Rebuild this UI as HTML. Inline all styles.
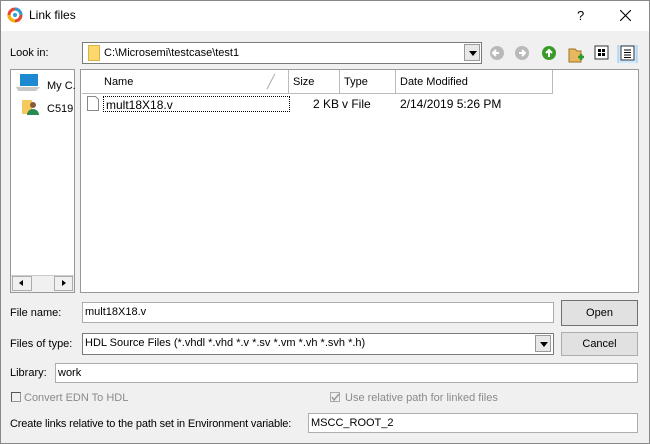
<!DOCTYPE html>
<html><head><style>
*{box-sizing:border-box;margin:0;padding:0}
body{width:650px;height:444px;overflow:hidden;font-family:"Liberation Sans",sans-serif;font-size:11px;color:#000;background:#f0f0f0;position:relative}
.a{position:absolute}
.win{left:0;top:0;width:650px;height:444px;border:1px solid #888;background:#f0f0f0}
.title{left:1px;top:1px;width:648px;height:30px;background:#fff}
.inp{background:#fff;border:1px solid #adadad;padding-left:2px;line-height:19px;white-space:nowrap}
.btn{background:#e1e1e1;border:1px solid #adadad;text-align:center}
.lbl{white-space:nowrap}
.dd{width:16px;height:17px;background:#e8e8e8;border:1px solid #999;}
.dd:after{content:"";position:absolute;left:4px;top:6px;border-left:4px solid transparent;border-right:4px solid transparent;border-top:5px solid #000}
.hd{top:1px;height:24px;line-height:24px;padding-left:4px;border-right:1px solid #bbb;background:#fff;white-space:nowrap}
</style></head><body>
<div class="a win"></div>
<div class="a title"></div>
<svg class="a" style="left:7px;top:7px" width="16" height="16" viewBox="0 0 16 16"><circle cx="8" cy="8" r="6" fill="none" stroke="#e8432d" stroke-width="3"/><path d="M8 2 A6 6 0 0 1 14 8" fill="none" stroke="#2a9fd8" stroke-width="3"/><path d="M2 8 A6 6 0 0 0 8 14" fill="none" stroke="#f4b400" stroke-width="3"/><circle cx="8" cy="8" r="2" fill="#2a9fd8"/></svg>
<div class="a lbl" style="left:29px;top:8px;font-size:12px">Link files</div>
<div class="a lbl" style="left:577px;top:8px;font-size:13px">?</div>
<svg class="a" style="left:620px;top:10px" width="11" height="11"><path d="M0 0L11 11M11 0L0 11" stroke="#000" stroke-width="1.1"/></svg>

<div class="a lbl" style="left:10px;top:47px">Look in:</div>
<div class="a inp" style="left:82px;top:42px;width:400px;height:22px;border-color:#7a7a7a"></div>
<div class="a" style="left:88px;top:45px;width:12px;height:16px;background:#fcd96d;border:1px solid #d9b24a"></div>
<div class="a lbl" style="left:104px;top:47px">C:\Microsemi\testcase\test1</div>
<div class="a dd" style="left:464px;top:44px"></div>
<svg class="a" style="left:489px;top:45px" width="150" height="18">
<circle cx="8" cy="8" r="7" fill="#b9b9b9"/><path d="M10 8H5M7 5L4 8L7 11" stroke="#fff" stroke-width="2" fill="none"/>
<circle cx="33" cy="8" r="7" fill="#b9b9b9"/><path d="M30 8H35M33 5L36 8L33 11" stroke="#fff" stroke-width="2" fill="none"/>
<circle cx="60" cy="8" r="7" fill="#3a9a2a"/><path d="M60 12V6M57 8L60 5L63 8" stroke="#fff" stroke-width="2" fill="none"/>
<path d="M80 4h6l2 2h4v11h-12z" fill="#e8b860" stroke="#a07020"/><path d="M89 12h6M92 9v6" stroke="#2a9a2a" stroke-width="2.5"/>
<rect x="106" y="1" width="13" height="13" fill="#fff" stroke="#333"/><rect x="109" y="4" width="3" height="3"/><rect x="113" y="4" width="3" height="3"/><rect x="109" y="8" width="3" height="3"/><rect x="113" y="8" width="3" height="3"/>
<rect x="129" y="-1" width="19" height="20" fill="#cce8ff" stroke="#99c8ee"/><rect x="132" y="1" width="13" height="14" fill="#fff" stroke="#333"/><path d="M135 5h7M135 7.5h7M135 10h7M135 12.5h7" stroke="#000"/>
</svg>

<div class="a" style="left:10px;top:69px;width:65px;height:224px;background:#fff;border:1px solid #999"></div>
<svg class="a" style="left:14px;top:72px" width="28" height="48"><rect x="6" y="2" width="18" height="12" fill="#1e88d0"/><path d="M2 15h24l-4 4H4z" fill="#c8c8c8"/><rect x="8" y="28" width="10" height="14" fill="#f4c95d"/><circle cx="19" cy="33" r="3" fill="#8a5a3a"/><path d="M13 43a6 6 0 0 1 12 0z" fill="#2a8a50"/></svg>
<div class="a lbl" style="left:47px;top:80px">My C.</div>
<div class="a lbl" style="left:47px;top:103px">C519</div>
<div class="a" style="left:11px;top:275px;width:63px;height:17px;background:#f0f0f0;border-top:1px solid #ccc"></div>
<div class="a btn" style="left:12px;top:276px;width:20px;height:15px;background:#f0f0f0"></div>
<div class="a" style="left:19px;top:280px;border-top:3px solid transparent;border-bottom:3px solid transparent;border-right:4px solid #000"></div>
<div class="a btn" style="left:54px;top:276px;width:19px;height:15px;background:#f0f0f0"></div>
<div class="a" style="left:62px;top:280px;border-top:3px solid transparent;border-bottom:3px solid transparent;border-left:4px solid #000"></div>

<div class="a" style="left:80px;top:69px;width:559px;height:224px;background:#fff;border:1px solid #999"></div>
<div class="a" style="left:81px;top:70px;width:557px;height:26px;background:#fff"></div>
<div class="a hd" style="left:82px;top:70px;width:207px;padding-left:22px;border-bottom:1px solid #bbb">Name</div>
<div class="a lbl" style="left:267px;top:74px;color:#aaa;font-size:13px">╱</div>
<div class="a hd" style="left:289px;top:70px;width:51px;border-bottom:1px solid #bbb">Size</div>
<div class="a hd" style="left:340px;top:70px;width:56px;border-bottom:1px solid #bbb">Type</div>
<div class="a hd" style="left:396px;top:70px;width:157px;border-bottom:1px solid #bbb">Date Modified</div>
<svg class="a" style="left:87px;top:96px" width="12" height="15"><path d="M.5 .5h8l3 3v11H.5z" fill="#fff" stroke="#888"/></svg>
<div class="a" style="left:103px;top:96px;width:187px;height:16px;border:1px dotted #000"></div>
<div class="a lbl" style="left:106px;top:98px;font-size:12px">mult18X18.v</div>
<div class="a lbl" style="left:313px;top:97px;font-size:12px">2 KB</div>
<div class="a lbl" style="left:342px;top:97px;font-size:12px">v File</div>
<div class="a lbl" style="left:400px;top:97px;font-size:12px">2/14/2019 5:26 PM</div>

<div class="a lbl" style="left:10px;top:307px">File name:</div>
<div class="a inp" style="left:82px;top:302px;width:472px;height:21px">mult18X18.v</div>
<div class="a btn" style="left:561px;top:300px;width:77px;height:26px;line-height:24px;border:1px solid #707070">Open</div>
<div class="a lbl" style="left:10px;top:338px">Files of type:</div>
<div class="a inp" style="left:82px;top:333px;width:472px;height:22px;border-color:#7a7a7a">HDL Source Files (*.vhdl *.vhd *.v *.sv *.vm *.vh *.svh *.h)</div>
<div class="a dd" style="left:535px;top:335px"></div>
<div class="a btn" style="left:561px;top:332px;width:77px;height:24px;line-height:22px">Cancel</div>
<div class="a lbl" style="left:10px;top:367px">Library:</div>
<div class="a inp" style="left:55px;top:363px;width:583px;height:20px">work</div>
<div class="a" style="left:11px;top:392px;width:10px;height:10px;border:1px solid #999;background:#f0f0f0;border-top-color:#555;border-left-color:#555"></div>
<div class="a lbl" style="left:24px;top:392px;color:#8a8a8a">Convert EDN To HDL</div>
<div class="a" style="left:330px;top:392px;width:10px;height:10px;border:1px solid #aaa;background:#f0f0f0"></div>
<svg class="a" style="left:331px;top:393px" width="9" height="9"><path d="M1 4l2 3 5-6" stroke="#999" stroke-width="1.5" fill="none"/></svg>
<div class="a lbl" style="left:345px;top:392px;color:#8a8a8a">Use relative path for linked files</div>
<div class="a lbl" style="left:10px;top:418px;letter-spacing:-0.15px">Create links relative to the path set in Environment variable:</div>
<div class="a inp" style="left:308px;top:413px;width:330px;height:20px">MSCC_ROOT_2</div>
</body></html>
